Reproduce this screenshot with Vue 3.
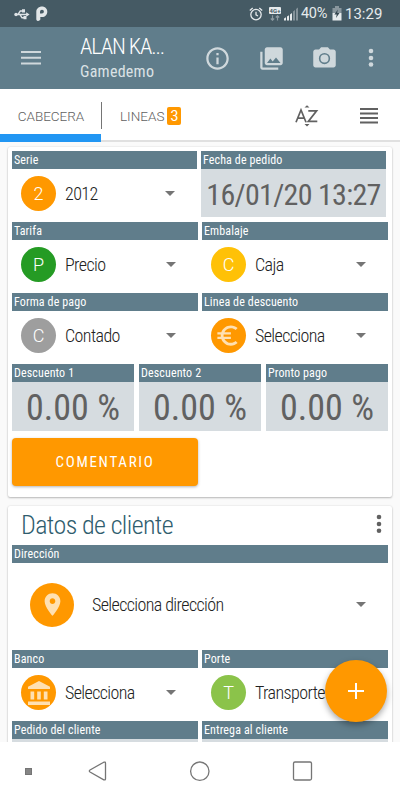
<template>
  <div class="screen">
    <!-- Barra de estado -->
    <div class="status-bar">
      <svg class="usb" width="16" height="12" viewBox="0 0 16 12">
        <g fill="none" stroke="#dfe4e7" stroke-width="1.4">
          <path d="M2 6.5H13M4 6.3L6.3 3H9M6 6.7L8 9.8H10.5" />
        </g>
        <circle cx="2" cy="6.5" r="1.7" fill="#dfe4e7" />
        <path d="M12.2 4.2L15.6 6.5L12.2 8.8ZM8 1.3H11V4.5H8ZM9.5 8.1H12.5V11.3H9.5Z" fill="#dfe4e7" />
      </svg>
      <svg class="p-logo" width="12" height="15" viewBox="0 0 12 15">
        <path fill="#e2e6e8" fill-rule="evenodd" d="M6 .5C9 .5 11.3 2.7 11.3 5.7S9 11 6 11H4.3V12.2A2 2 0 0 1 .3 13.4V5.7C.3 2.7 3 .5 6 .5ZM6 3.7A2 2 0 0 0 4 5.7V7.5H6A1.9 1.9 0 0 0 6 3.7Z" />
      </svg>
      <div class="status-right">
        <svg width="14" height="14" viewBox="0 0 14 14" fill="none" stroke="#e6eaec" stroke-width="1.3">
          <circle cx="7" cy="7.6" r="5.2" />
          <path d="M7 4.7V7.9L9 9M.8 3.6L3.7 1.1M10.3 1.1L13.2 3.6" />
        </svg>
        <span class="lte">
          <span class="lte-badge">4G+</span>
          <svg width="10" height="6" viewBox="0 0 10 6" fill="none" stroke="#8e9ba2" stroke-width="1.2">
            <path d="M2.5 .3V5M.8 3.5L2.5 5.2L4.2 3.5M7.5 5.5V1M5.8 2.5L7.5 .8L9.2 2.5" />
          </svg>
        </span>
        <svg class="signal" width="14" height="14" viewBox="0 0 14 14">
          <path d="M0 13.5V11.5L2 10.3V13.5ZM3 13.5V9.6L5 8.2V13.5ZM6 13.5V7.5L8 6V13.5Z" fill="#e6eaec" />
          <path d="M9 13.5V4.6L11 3.1V13.5ZM12 13.5V2L14 .5V13.5Z" fill="#84929a" />
        </svg>
        <span class="percent">40%</span>
        <svg class="battery" width="10" height="15" viewBox="0 0 10 15">
          <path d="M3 0H7V2H9.5V7H.5V2H3Z" fill="#89969d" />
          <path d="M.5 7H9.5V14.5H.5Z" fill="#e6eaec" />
          <path d="M5.8 3.5L2.4 8.6H4.7L4 12L7.5 7H5.2Z" fill="#34454e" />
        </svg>
        <span class="clock">13:29</span>
      </div>
    </div>

    <!-- Cabecera de la aplicación -->
    <header class="app-bar">
      <svg class="menu" width="20" height="14" viewBox="0 0 20 14">
        <path d="M0 0H20V2H0ZM0 5.7H20V7.8H0ZM0 11.5H20V13.6H0Z" fill="#cfd8dc" />
      </svg>
      <div class="titles">
        <div class="title">ALAN KA...</div>
        <div class="subtitle">Gamedemo</div>
      </div>
      <div class="actions">
        <svg width="27" height="27" viewBox="0 0 24 24" fill="#cfd8dc">
          <path d="M11 17h2v-6h-2v6zm1-15C6.48 2 2 6.48 2 12s4.48 10 10 10 10-4.48 10-10S17.52 2 12 2zm0 18c-4.41 0-8-3.59-8-8s3.59-8 8-8 8 3.59 8 8-3.59 8-8 8zM11 9h2V7h-2v2z" />
        </svg>
        <svg width="27" height="27" viewBox="0 0 24 24" fill="#cfd8dc">
          <path d="M22 16V4c0-1.1-.9-2-2-2H8c-1.1 0-2 .9-2 2v12c0 1.1.9 2 2 2h12c1.1 0 2-.9 2-2zm-11-4l2.03 2.71L16 11l4 5H8l3-4zM2 6v14c0 1.1.9 2 2 2h14v-2H4V6H2z" />
        </svg>
        <svg width="27" height="27" viewBox="0 0 24 24" fill="#cfd8dc">
          <path fill-rule="evenodd" d="M9 2L7.17 4H4c-1.1 0-2 .9-2 2v12c0 1.1.9 2 2 2h16c1.1 0 2-.9 2-2V6c0-1.1-.9-2-2-2h-3.17L15 2H9zM12 7a5 5 0 1 1 0 10 5 5 0 0 1 0-10zM12 8.4a3.6 3.6 0 1 0 0 7.2 3.6 3.6 0 0 0 0-7.2z" />
        </svg>
        <svg width="6" height="20" viewBox="0 0 6 20" fill="#cfd8dc">
          <circle cx="3" cy="3" r="2.3" /><circle cx="3" cy="10" r="2.3" /><circle cx="3" cy="16.5" r="2.3" />
        </svg>
      </div>
    </header>

    <nav class="tabs">
      <div class="tab active"><span>CABECERA</span></div>
      <div class="tab lines"><span>LINEAS</span><b class="count">3</b></div>
      <svg class="sort" width="24" height="22" viewBox="0 0 24 22">
        <path d="M9.5 2.6L12 .2L14.5 2.6ZM9.5 19L12 21.5L14.5 19Z" fill="#616161" />
        <path d="M1 17.2L6 5L11 17.2M2.6 13.2H9.4M13.3 5.8H21.6L13.3 16.4H22.3" fill="none" stroke="#616161" stroke-width="1.7" />
      </svg>
      <svg class="list" width="18" height="16" viewBox="0 0 18 16">
        <path d="M0 0H18V2H0ZM0 4.6H18V6.4H0ZM0 9H18V11H0ZM0 13.6H18V15.5H0Z" fill="#616161" />
      </svg>
    </nav>

    <main class="content">
      <section class="card">
        <div class="row first">
          <div class="field">
            <div class="label">Serie</div>
            <div class="select">
              <span class="avatar orange">2</span>
              <span class="value">2012</span>
              <i class="caret"></i>
            </div>
          </div>
          <div class="field">
            <div class="label">Fecha de pedido</div>
            <div class="box date">16/01/20 13:27</div>
          </div>
        </div>

        <div v-for="(row, i) in rows" :key="i" class="row">
          <div v-for="field in row" :key="field.label" class="field">
            <div class="label">{{ field.label }}</div>
            <div class="select">
              <span class="avatar" :class="field.color">
                <svg v-if="field.icon" class="euro" width="27" height="27" viewBox="0 0 24 24" fill="#ffe0b2">
                  <path :d="icons[field.icon]" />
                </svg>
                <template v-else>{{ field.letter }}</template>
              </span>
              <span class="value">{{ field.value }}</span>
              <i class="caret"></i>
            </div>
          </div>
        </div>

        <div class="row discounts">
          <div v-for="name in discounts" :key="name" class="field">
            <div class="label">{{ name }}</div>
            <div class="box amount">0.00 %</div>
          </div>
        </div>

        <button class="comment">COMENTARIO</button>
      </section>

      <section class="card client">
        <div class="card-head">
          <h2>Datos de cliente</h2>
          <svg width="6" height="20" viewBox="0 0 6 20" fill="#616161">
            <circle cx="3" cy="3" r="2.3" /><circle cx="3" cy="10" r="2.3" /><circle cx="3" cy="16.7" r="2.3" />
          </svg>
        </div>

        <div class="field address">
          <div class="label">Dirección</div>
          <div class="select">
            <span class="avatar orange">
              <svg width="27" height="27" viewBox="0 0 24 24" fill="#ffe0b2">
                <path :d="icons.place" />
              </svg>
            </span>
            <span class="value">Selecciona dirección</span>
            <i class="caret"></i>
          </div>
        </div>

        <div class="row">
          <div class="field">
            <div class="label">Banco</div>
            <div class="select">
              <span class="avatar orange">
                <svg width="24" height="24" viewBox="0 0 24 24" fill="#ffe0b2">
                  <path :d="icons.bank" />
                </svg>
              </span>
              <span class="value">Selecciona</span>
              <i class="caret"></i>
            </div>
          </div>
          <div class="field">
            <div class="label">Porte</div>
            <div class="select">
              <span class="avatar lime">T</span>
              <span class="value">Transporte</span>
            </div>
          </div>
        </div>

        <div class="row">
          <div class="field">
            <div class="label">Pedido del cliente</div>
            <div class="box"></div>
          </div>
          <div class="field">
            <div class="label">Entrega al cliente</div>
            <div class="box"></div>
          </div>
        </div>
      </section>
    </main>

    <button class="fab">
      <svg width="16" height="16" viewBox="0 0 16 16"><path d="M7 0H9V7H16V9H9V16H7V9H0V7H7Z" fill="#fff" /></svg>
    </button>

    <!-- Navegación del sistema -->
    <footer class="nav-bar">
      <svg width="400" height="58" viewBox="0 0 400 58" fill="none" stroke="#757575" stroke-width="1.3">
        <rect x="25.5" y="26.5" width="6" height="6" fill="#858585" stroke="#757575" stroke-width="1" />
        <path d="M103.8 20.2L90 28Q88.6 29 90 30L103.8 37.8Q105.5 38.4 105.5 36.8V21.2Q105.5 19.6 103.8 20.2Z" />
        <circle cx="199.8" cy="29.2" r="9.2" />
        <rect x="293.5" y="20" width="18" height="18" rx="1.5" />
      </svg>
    </footer>
  </div>
</template>

<script setup>
const rows = [
  [
    { label: 'Tarifa', letter: 'P', value: 'Precio', color: 'green' },
    { label: 'Embalaje', letter: 'C', value: 'Caja', color: 'amber' }
  ],
  [
    { label: 'Forma de pago', letter: 'C', value: 'Contado', color: 'grey' },
    { label: 'Linea de descuento', icon: 'euro', value: 'Selecciona', color: 'orange' }
  ]
];

const discounts = ['Descuento 1', 'Descuento 2', 'Pronto pago'];

const icons = {
  euro: 'M15 18.5c-2.51 0-4.68-1.42-5.76-3.5H15v-2H8.58c-.05-.33-.08-.66-.08-1s.03-.67.08-1H15V9H9.24C10.32 6.92 12.5 5.5 15 5.5c1.61 0 3.09.59 4.23 1.57L21 5.3C19.41 3.87 17.3 3 15 3c-3.92 0-7.24 2.51-8.48 6H3v2h3.06c-.04.33-.06.66-.06 1s.02.67.06 1H3v2h3.52c1.24 3.49 4.56 6 8.48 6 2.31 0 4.41-.87 6-2.3l-1.78-1.77c-1.13.98-2.6 1.57-4.22 1.57z',
  place: 'M12 2C8.13 2 5 5.13 5 9c0 5.25 7 13 7 13s7-7.75 7-13c0-3.87-3.13-7-7-7zm0 9.5c-1.38 0-2.5-1.12-2.5-2.5s1.12-2.5 2.5-2.5 2.5 1.12 2.5 2.5-1.12 2.5-2.5 2.5z',
  bank: 'M3.5 10.5V18.5H7.2V10.5ZM10.2 10.5V18.5H13.8V10.5ZM16.8 10.5V18.5H20.5V10.5ZM1 20.5V24H23V20.5ZM12 0L1 5.8V8H23V5.8Z'
};
</script>

<style>
body { background: #fff; }
</style>

<style scoped>
.screen {
  position: relative; width: 400px; height: 800px; overflow: hidden;
  display: flex; flex-direction: column; box-sizing: border-box;
  background: #fafafa; color: #212121;
  font-family: 'Roboto Condensed', Roboto, sans-serif; font-stretch: 75%;
}
.screen * { box-sizing: border-box; }
svg { display: block; flex: none; }
button { border: 0; padding: 0; font: inherit; }

.status-bar {
  height: 27px; flex: none; background: #455a64;
  display: flex; align-items: center; padding: 0 17px 0 14px;
}
.p-logo { margin-left: 6px; }
.status-right {
  margin-left: auto; display: flex; align-items: center;
  color: #e6eaec; font-family: Roboto, sans-serif; font-stretch: 100%; font-size: 15px;
}
.lte { display: flex; flex-direction: column; align-items: center; gap: 1px; margin-left: 6px; }
.lte-badge {
  width: 12px; height: 7px; border-radius: 1px; background: #e6eaec;
  color: #455a64; font-size: 6px; line-height: 7px; font-weight: 700; text-align: center;
}
.signal { margin-left: 3px; }
.percent { margin-left: 3px; width: 27px; font-size: 14.5px; line-height: 18px; padding-top: 1px; letter-spacing: -0.3px; }
.battery { margin-left: 4px; }
.clock { margin-left: 3px; width: 38px; }

.app-bar {
  height: 62px; flex: none; background: #607d8b;
  display: flex; align-items: center; padding: 0 26px 0 21px;
}
.titles { margin-left: 39px; color: #fff; }
.title { margin-top: 1px; font-size: 22.5px; line-height: 26px; font-weight: 300; letter-spacing: -1.1px; white-space: nowrap; }
.subtitle { font-size: 16px; line-height: 25px; letter-spacing: 0.25px; color: #dbe2e5; }
.actions { margin-left: auto; display: flex; align-items: center; }
.actions svg:nth-child(2), .actions svg:nth-child(3) { margin-left: 26.5px; }
.actions svg:nth-child(4) { margin-left: 30px; }

.tabs {
  height: 53px; flex: none; background: #fff; border-bottom: 2px solid #e0e0e0;
  display: flex; align-items: center; padding-right: 22px;
  font-family: Roboto, sans-serif; font-stretch: 100%; font-size: 13.5px; color: #616161;
}
.tab { display: flex; align-items: center; height: 53px; margin-bottom: -2px; font-weight: 300; }
.active {
  position: relative; width: 102px; justify-content: center;
  background: linear-gradient(#757575, #757575) 101px 13px / 1px 27px no-repeat;
}
.active::after { content: ''; position: absolute; left: 0; bottom: 0; width: 101px; height: 8px; background: #2196f3; }
.lines { padding-left: 18px; }
.count {
  margin-left: 3px; width: 14px; height: 18px; border-radius: 2px; background: #ff9800;
  color: #fff; font-size: 14px; line-height: 18px; text-align: center; font-weight: 400;
}
.sort { margin-left: auto; position: relative; top: 1px; }
.list { margin-left: 41px; position: relative; top: 1px; }

.content { flex: 1; min-height: 0; overflow: hidden; padding: 5px 8px 0; }
.card {
  height: 350px; padding: 4px; background: #fff; border-radius: 2px;
  box-shadow: 0 1px 2px rgba(0, 0, 0, 0.24), 0 0 2px rgba(0, 0, 0, 0.12);
}
.row { display: flex; gap: 4px; height: 71px; }
.row.first { padding-right: 2px; }
.field { flex: 1; min-width: 0; }
.label {
  height: 18px; line-height: 19px; padding-left: 2px; background: #607d8b;
  color: #fff; font-size: 12px; letter-spacing: 0.12px; white-space: nowrap;
}
.select { height: 49px; display: flex; align-items: center; padding: 0 22px 0 9px; }
.avatar {
  width: 35px; height: 35px; flex: none; border-radius: 50%;
  display: flex; align-items: center; justify-content: center;
  color: #fff; font: 300 18px Roboto, sans-serif;
}
.euro { margin-right: 3px; }
.orange { background: #ff9800; }
.green { background: #259b24; }
.amber { background: #ffc107; }
.grey { background: #9e9e9e; }
.lime { background: #8bc34a; }
.value { margin-left: 9px; font-size: 18px; font-weight: 300; letter-spacing: -0.6px; line-height: 24px; padding-top: 1px; white-space: nowrap; }
.caret {
  margin-left: auto; border: 5.5px solid transparent;
  border-top-color: #757575; border-bottom: 0;
}
.box {
  height: 49px; background: #d6dce0; color: #616161;
  text-align: center; white-space: nowrap; overflow: hidden;
}
.date { height: 48px; line-height: 51px; font-size: 30px; letter-spacing: -0.7px; }
.discounts { gap: 5px; height: 74px; }
.amount { line-height: 52px; font-size: 36px; }

.comment {
  display: block; width: 186px; height: 48px; border-radius: 4px;
  background: #ff9800; color: #fff; font-size: 15px; letter-spacing: 1.7px;
  box-shadow: 0 1px 3px rgba(0, 0, 0, 0.3);
}

.client { margin-top: 9px; }
.card-head { height: 35px; display: flex; align-items: center; justify-content: space-between; padding: 0 6px 8px 9px; }
h2 { margin: 2px 0 0; font-size: 26px; line-height: 30px; font-weight: 300; letter-spacing: -0.6px; color: #2f5d6e; }
.address { height: 105px; }
.address .select { height: 83px; padding-left: 18px; }
.address .avatar { width: 44px; height: 44px; }
.address .value { margin-left: 18px; }

.fab {
  position: absolute; left: 325px; top: 660px; width: 62px; height: 62px;
  border-radius: 50%; background: #ff9800;
  display: flex; align-items: center; justify-content: center;
  box-shadow: 0 3px 6px rgba(0, 0, 0, 0.35);
}

.nav-bar { height: 58px; flex: none; background: #fff; }
</style>
